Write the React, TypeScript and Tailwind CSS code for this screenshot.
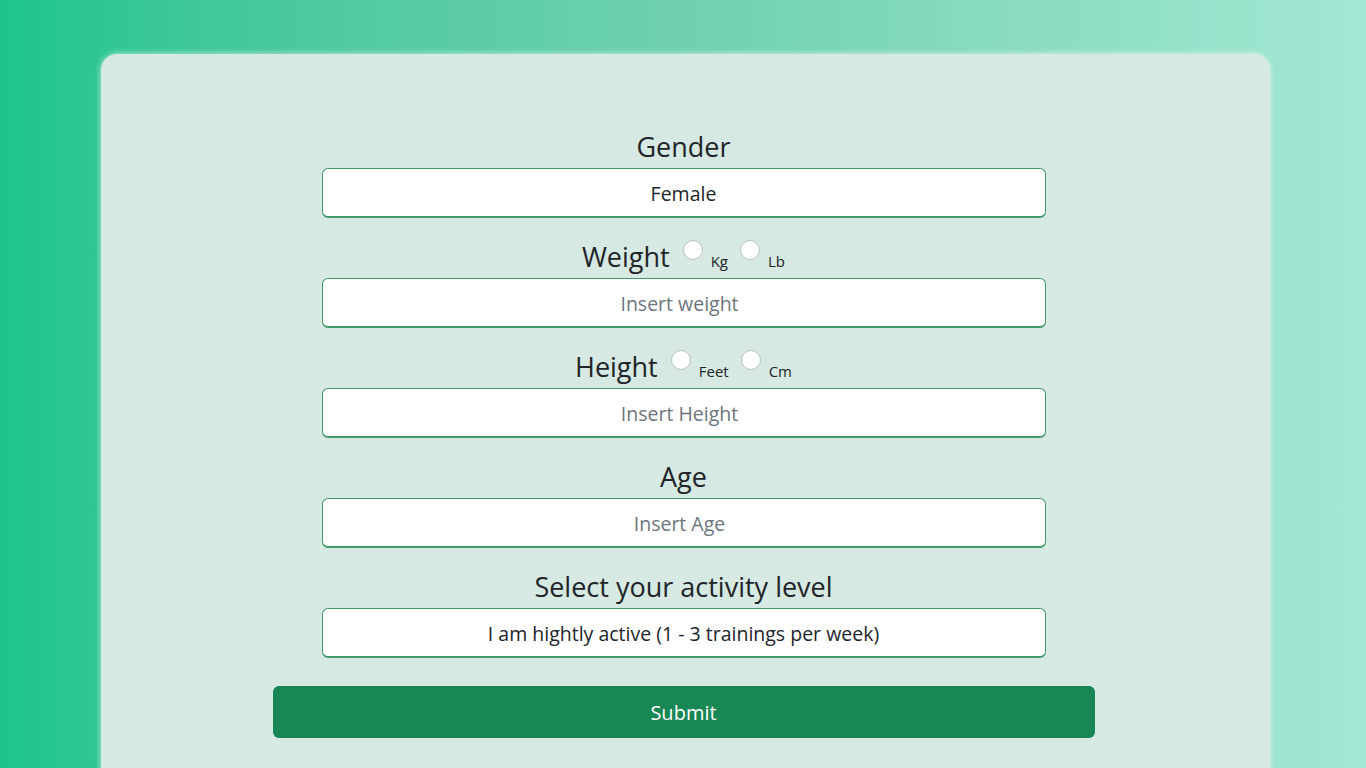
import React, { useState } from "react";

const font = { fontFamily: '"Open Sans", "Noto Sans", sans-serif' };

const UnitRadio = ({ label, first }: { label: string; first?: boolean }) => (
  <label className={`flex items-end gap-[8px] ${first ? "ml-[13px]" : "ml-[12px]"}`}>
    <span className="w-5 h-5 rounded-full border border-[#b9c0c4] bg-white mb-[10px]" />
    <span className="text-[15px] leading-none mb-[1px]">{label}</span>
  </label>
);

const TextBox = ({ value, placeholder }: { value?: string; placeholder?: string }) => (
  <div className="w-[724px] h-[50px] bg-white border border-[#3f9a68] border-b-2 rounded-[6px] flex items-center justify-center text-[19.5px] pt-[3px]">
    {value ? (
      <span className="text-[#212529]">{value}</span>
    ) : (
      <span className="text-[#6c757d] -ml-2">{placeholder}</span>
    )}
  </div>
);

const App: React.FC = () => {
  const [gender] = useState("Female");

  return (
    <div
      className="min-h-screen h-[768px] overflow-hidden bg-gradient-to-r from-[#1bc48d] via-[#6fd0b1] to-[#a2e7d3] pt-[54px]"
      style={font}
    >
      <div className="ml-[101px] w-[1169px] h-[760px] bg-[#d6e9e2] rounded-[16px] shadow-[0_0_6px_rgba(255,255,255,0.7)] flex flex-col items-center pt-[74px] pr-[4px] text-[#212529]">
        {/* gender */}
        <div className="flex flex-col items-center">
          <h2 className="text-[27px] leading-none h-[40px] flex items-end pb-[8px]">Gender</h2>
          <TextBox value={gender} />
        </div>

        <div className="flex flex-col items-center mt-[10px]">
          <div className="h-[50px] flex items-end pb-[8px]">
            <span className="text-[27px] leading-none">Weight</span>
            <UnitRadio label="Kg" first />
            <UnitRadio label="Lb" />
          </div>
          <TextBox placeholder="Insert weight" />
        </div>

        <div className="flex flex-col items-center mt-[10px]">
          <div className="h-[50px] flex items-end pb-[8px]">
            <span className="text-[27px] leading-none">Height</span>
            <UnitRadio label="Feet" first />
            <UnitRadio label="Cm" />
          </div>
          <TextBox placeholder="Insert Height" />
        </div>

        <div className="flex flex-col items-center mt-[10px]">
          <div className="h-[50px] flex items-end pb-[8px]">
            <span className="text-[27px] leading-none">Age</span>
          </div>
          <TextBox placeholder="Insert Age" />
        </div>

        <div className="flex flex-col items-center mt-[10px]">
          <div className="h-[50px] flex items-end pb-[8px]">
            <span className="text-[27px] leading-none">Select your activity level</span>
          </div>
          <TextBox value="I am hightly active (1 - 3 trainings per week)" />
        </div>

        <button className="mt-[28px] w-[822px] h-[52px] rounded-[6px] bg-[#198754] text-white text-[20px] pt-[2px]">
          Submit
        </button>
      </div>
    </div>
  );
};

export default App;
